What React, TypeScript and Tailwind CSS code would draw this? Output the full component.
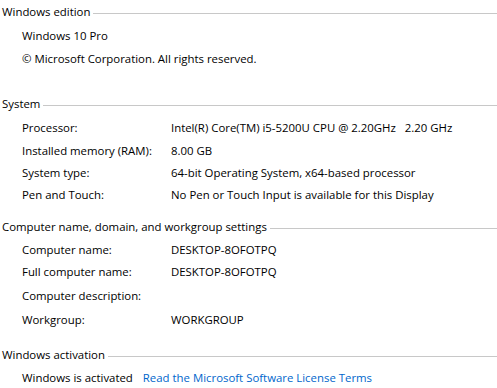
const editionRows = [
	{ label: "Windows 10 Pro", mt: "mt-[2px]" },
	{ label: "© Microsoft Corporation. All rights reserved.", mt: "mt-[1px]" }
];

const systemRows = [
	{ label: "Processor:", value: "Intel(R) Core(TM) i5-5200U CPU @ 2.20GHz   2.20 GHz", mt: "mt-[2px]" },
	{ label: "Installed memory (RAM):", value: "8.00 GB", mt: "mt-[1px]" },
	{ label: "System type:", value: "64-bit Operating System, x64-based processor", mt: "mt-0" },
	{ label: "Pen and Touch:", value: "No Pen or Touch Input is available for this Display", mt: "mt-0" }
];

const computerRows = [
	{ label: "Computer name:", value: "DESKTOP-8OFOTPQ", mt: "mt-[1px]" },
	{ label: "Full computer name:", value: "DESKTOP-8OFOTPQ", mt: "mt-0" },
	{ label: "Computer description:", value: "", mt: "mt-[2px]" },
	{ label: "Workgroup:", value: "WORKGROUP", mt: "mt-[2px]" }
];

function Header({ title, className }: { title: string; className: string }) {
	return (
		<div className={`flex items-center h-[22px] pl-[2px] ${className}`}>
			<span className="whitespace-nowrap">{title}</span>
			<div className="flex-1 ml-[3px] h-px bg-[#c8c8c8] mt-[2px]" />
		</div>
	);
}

function Row({ label, value, mt }: { label: string; value: string; mt: string }) {
	return (
		<div className={`flex h-[22px] items-center pl-[22px] ${mt}`}>
			<span className="w-[149px] shrink-0 whitespace-nowrap">{label}</span>
			<span className="whitespace-pre">{value}</span>
		</div>
	);
}

export default function App() {
	return (
		<div
			className="w-[497px] h-[388px] pt-[1px] bg-white text-black text-[11.4px] overflow-hidden"
			style={{ fontFamily: '"Open Sans", "Noto Sans", sans-serif' }}
		>
			<Header title="Windows edition" className="mt-0" />
			{editionRows.map(r => (
				<div key={r.label} className={`flex h-[22px] items-center pl-[22px] ${r.mt}`}>
					{r.label}
				</div>
			))}

			<Header title="System" className="mt-[23px]" />
			{systemRows.map(r => (
				<Row key={r.label} {...r} />
			))}

			<Header title="Computer name, domain, and workgroup settings" className="mt-[10px]" />
			{computerRows.map(r => (
				<Row key={r.label} {...r} />
			))}

			<Header title="Windows activation" className="mt-[13px]" />
			<div className="flex h-[22px] items-center pl-[22px] mt-[1px]">
				<span className="whitespace-nowrap">Windows is activated</span>
				<span className="ml-[10px] text-[#0066cc] whitespace-nowrap">
					Read the Microsoft Software License Terms
				</span>
			</div>
		</div>
	);
}
